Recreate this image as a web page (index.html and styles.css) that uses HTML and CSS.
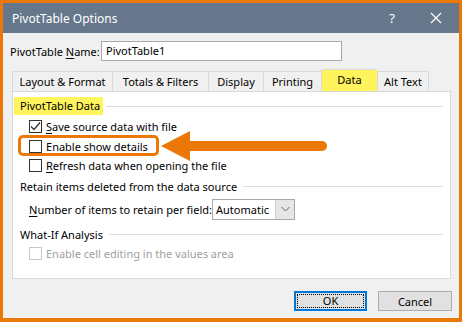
FILE: index.html
```html
<!DOCTYPE html>
<html lang="en">
<head>
  <meta charset="UTF-8">
  <title>PivotTable Options</title>
  <link rel="stylesheet" href="styles.css">
</head>
<body>
  <div class="window">
    <div class="titlebar">
      <span class="title">PivotTable Options</span>
      <span class="help">?</span>
      <svg class="close" width="12" height="12" viewBox="0 0 12 12">
        <path d="M1 1 L11 11 M11 1 L1 11" stroke="#fff" stroke-width="1.2" fill="none"/>
      </svg>
    </div>

    <div class="content">
      <div class="name-row">
        <span class="name-label">PivotTable <u>N</u>ame:</span>
        <div class="textbox">PivotTable1</div>
      </div>

      <div class="tabs">
        <div class="tab tab-layout">Layout &amp; Format</div>
        <div class="tab tab-totals">Totals &amp; Filters</div>
        <div class="tab tab-display">Display</div>
        <div class="tab tab-printing">Printing</div>
        <div class="tab tab-data active">Data</div>
        <div class="tab tab-alt">Alt Text</div>
      </div>

      <div class="panel">
        <div class="group first">
          <span class="group-title marked">PivotTable Data</span>
          <span class="rule"></span>
        </div>
        <div class="check-row">
          <span class="box">
            <svg width="11" height="11" viewBox="0 0 11 11"><path d="M1 5.5 L4 8.5 L10 1.5" stroke="#333" stroke-width="1.3" fill="none"/></svg>
          </span>
          <span><u>S</u>ave source data with file</span>
        </div>
        <div class="check-row">
          <span class="box"></span>
          <span><u>E</u>nable show details</span>
        </div>
        <div class="check-row">
          <span class="box"></span>
          <span><u>R</u>efresh data when opening the file</span>
        </div>

        <div class="group">
          <span class="group-title">Retain items deleted from the data source</span>
          <span class="rule"></span>
        </div>
        <div class="select-row">
          <span class="select-label"><u>N</u>umber of items to retain per field:</span>
          <div class="select">
            <span class="select-value">Automatic</span>
            <span class="select-btn">
              <svg width="9" height="6" viewBox="0 0 9 6"><path d="M0.5 1 L4.5 5 L8.5 1" stroke="#666" stroke-width="1" fill="none"/></svg>
            </span>
          </div>
        </div>

        <div class="group">
          <span class="group-title">What-If Analysis</span>
          <span class="rule"></span>
        </div>
        <div class="check-row disabled">
          <span class="box"></span>
          <span>Enable cell editing in the values area</span>
        </div>
      </div>

      <div class="buttons">
        <button class="btn default"><span class="focus">OK</span></button>
        <button class="btn">Cancel</button>
      </div>
    </div>

    <div class="callout"></div>
    <svg class="arrow" width="170" height="32" viewBox="0 0 170 32">
      <polygon points="1,16 30,1 30,31" fill="#eb7806"/>
      <rect x="26" y="11" width="141" height="10" rx="5" fill="#eb7806"/>
    </svg>
  </div>
</body>
</html>
```

FILE: styles.css
```css
* {
  box-sizing: border-box;
}
body {
  margin: 0;
  font-family: "Noto Sans", "Open Sans", sans-serif;
  font-size: 11px;
  color: #000;
  white-space: nowrap;
}
u {
  text-decoration-thickness: 1px;
  text-underline-offset: 2px;
}
.window {
  position: relative;
  width: 462px;
  height: 322px;
  border: 3px solid #eb7806;
  border-bottom-width: 4px;
  background: #f0f0f0;
  display: flex;
  flex-direction: column;
}
.titlebar {
  height: 30px;
  background: #66778b;
  color: #fff;
  display: flex;
  align-items: center;
  padding-left: 9px;
  font-size: 12px;
}
.title {
  flex: 1;
}
.help {
  margin-right: 35px;
  font-size: 13px;
}
.close {
  margin-right: 17px;
}
.content {
  flex: 1;
  padding: 8px 8px 0 9px;
  display: flex;
  flex-direction: column;
}
.name-row {
  display: flex;
  align-items: center;
  height: 20px;
  margin-left: -2px;
}
.name-label {
  width: 91px;
}
.textbox {
  width: 241px;
  height: 20px;
  background: #fff;
  border: 1px solid #a9a9a9;
  padding-left: 4px;
  line-height: 18px;
}
.tabs {
  display: flex;
  align-items: flex-end;
  height: 22px;
  margin-top: 8px;
}
.tab {
  height: 20px;
  line-height: 19px;
  border: 1px solid #d9d9d9;
  border-bottom: none;
  border-right: none;
  text-align: center;
}
.tab-layout { width: 100px; }
.tab-totals { width: 96px; }
.tab-display { width: 55px; }
.tab-printing { width: 58px; }
.tab-data { width: 56px; }
.tab-alt {
  width: 52px;
  border-right: 1px solid #d9d9d9;
}
.tab.active {
  height: 22px;
  line-height: 19px;
  background: #fff45c;
}
.panel {
  height: 188px;
  background: #fff;
  border: 1px solid #d9d9d9;
  padding: 0 7px 0 1px;
  display: flex;
  flex-direction: column;
}
.group {
  display: flex;
  align-items: center;
  height: 18px;
  margin-top: 2px;
}
.group.first {
  margin-top: 5px;
}
.group-title {
  padding: 0 3px 0 6px;
  line-height: 18px;
}
.group-title.marked {
  background: #fff45c;
}
.rule {
  flex: 1;
  height: 1px;
  background: #dcdcdc;
  margin-left: 3px;
}
.check-row {
  display: flex;
  align-items: center;
  height: 19.5px;
  padding-left: 15px;
}
.group.first + .check-row {
  margin-top: 2px;
}
.box {
  width: 13px;
  height: 13px;
  border: 1px solid #333;
  background: #fff;
  margin-right: 4px;
  display: flex;
  align-items: center;
  justify-content: center;
}
.check-row.disabled {
  color: #a0a0a0;
}
.check-row.disabled .box {
  border-color: #c8c8c8;
}
.select-row {
  display: flex;
  align-items: center;
  height: 21px;
  margin: 3px 0 4px;
  padding-left: 15px;
}
.select-label {
  width: 183px;
}
.select {
  display: flex;
  width: 83px;
  height: 21px;
  border: 1px solid #a9a9a9;
  background: #fff;
}
.select-value {
  flex: 1;
  padding-left: 3px;
  line-height: 19px;
}
.select-btn {
  width: 19px;
  background: #e6e6e6;
  border-left: 1px solid #cfcfcf;
  display: flex;
  align-items: center;
  justify-content: center;
}
.buttons {
  display: flex;
  justify-content: flex-end;
  gap: 11px;
  margin-top: 12px;
  margin-right: -1px;
}
.btn {
  width: 73px;
  height: 20px;
  border: 1px solid #adadad;
  background: #e1e1e1;
  font: inherit;
  color: #000;
  padding: 0;
}
.btn:last-child {
  width: 74px;
}
.btn.default {
  border: 2px solid #0078d7;
  padding: 1px;
}
.focus {
  display: block;
  height: 100%;
  border: 1px dotted #000;
  line-height: 12px;
}
.callout {
  position: absolute;
  left: 15px;
  top: 132px;
  width: 141px;
  height: 21px;
  border: 3px solid #eb7806;
  border-radius: 5px;
}
.arrow {
  position: absolute;
  left: 157px;
  top: 127px;
}
```
